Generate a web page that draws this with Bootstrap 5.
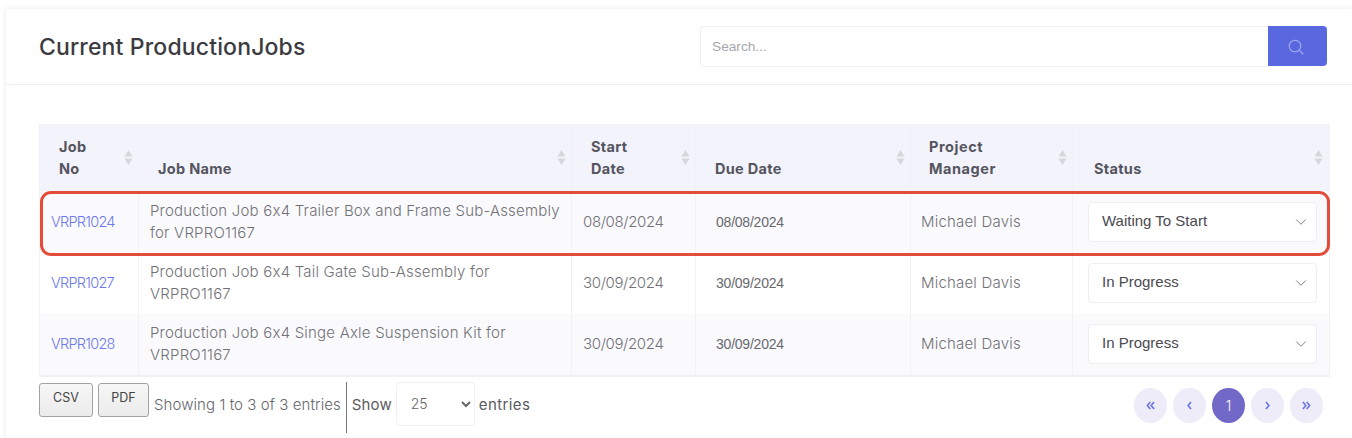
<!doctype html>
<html lang="en"><head><meta charset="utf-8"><title>Current Production Jobs</title>
<link href="https://cdn.jsdelivr.net/npm/bootstrap@5.3.0/dist/css/bootstrap.min.css" rel="stylesheet">
<style>
html,body{height:438px;overflow:hidden}
body{background:#fff;font-family:Inter,"Noto Sans",sans-serif;color:#6e6e73;font-feature-settings:"calt" 0,"liga" 0}
.job-panel{margin:9px 0 0 6px;height:440px;background:#fff;border:0;border-radius:0;box-shadow:0 0 5px rgba(80,80,200,.13)}
.job-head{height:76px;padding:0 25px 0 33px;border-bottom:1px solid #eeeef6;display:flex;align-items:center;justify-content:space-between}
.job-title{font-size:23px;font-weight:500;color:#3b3b3f;margin:2px 0 0;letter-spacing:.15px}
.job-search{width:627px;height:41px}
.job-search input{border:1px solid #eeeef4;border-right:0;border-radius:4px 0 0 4px;font-size:13.7px;padding:0 11px;font-family:"Liberation Sans",sans-serif;height:41px}
.job-search input::placeholder{color:#a7a7af}
.job-search button{width:59px;height:40px;background:#5a68e0;border:0;border-radius:0 4px 4px 0;padding:0 4px 2px 0}
.job-body{padding:39px 16px 0 33px;position:relative}
.job-table{table-layout:fixed;width:1290px;margin:0;border-collapse:collapse;font-size:15px;line-height:22px}
.job-table th{background:#f3f3fb;color:#55555f;font-weight:700;font-size:14.5px;letter-spacing:.3px;vertical-align:bottom;padding:12px 19px 11px;height:67px;border:1px solid #f0f0f6;border-width:0 1px;position:relative}
.job-table th:nth-child(5){padding-left:18px;letter-spacing:.55px}
.job-table th:last-child{padding-left:21px}
.job-table td{color:#717177;font-weight:300;letter-spacing:.2px;padding:0 11px;height:61.6px;vertical-align:middle;border:1px solid #f1f1f6;border-width:0 1px;background:#fff}
.job-table td.cell-who{padding-left:10px}
.job-table tr.zebra td{background:#fafafd}
.job-table tbody{border-bottom:2px solid #f0f0f6}
.job-table a{color:#6c78ec;text-decoration:none;font-size:14.5px;letter-spacing:-.75px;font-weight:300}
.job-table td.cell-date{letter-spacing:-.35px}
.job-table td.cell-sm{font-family:"Liberation Sans",sans-serif;font-size:14px;font-weight:400;color:#68686e;letter-spacing:-.22px;padding-left:20px}
.job-table td.cell-st{padding:0 12px 0 15px}
.sort-ic{position:absolute;right:5px;top:26px;width:9px;height:15px}
.job-table th:last-child .sort-ic{right:6px}
.status-sel{height:40px;font-family:"Liberation Sans",sans-serif;font-size:15px;color:#4a4a50;border:1px solid #eeeef4;border-radius:4px;padding:0 30px 2px 13px;background-position:right 7px center;background-size:16px 12px;background-image:url("data:image/svg+xml,%3csvg xmlns='http://www.w3.org/2000/svg' viewBox='0 0 16 16'%3e%3cpath fill='none' stroke='%23666' stroke-linecap='round' stroke-width='1.1' d='M2 5l6 6 6-6'/%3e%3c/svg%3e")}
.job-mark{position:absolute;left:34px;top:105.5px;width:1290px;height:65px;border:3.5px solid #e34c39;border-radius:11px;pointer-events:none}
.job-foot{display:flex;justify-content:space-between;align-items:flex-start;height:60px;width:1291px;font-size:15px;font-weight:300;color:#66666b;padding-top:5px}
.job-foot .tool{height:34px;margin-top:1px;border:1px solid #a3a3a3;border-radius:3px;background:linear-gradient(#f6f6f6,#ececec);font-size:12.5px;color:#444;font-family:Inter,sans-serif;padding:0 0 3px;box-shadow:none}
.foot-txt{margin:12px 0 0 5px;font-weight:300;letter-spacing:.08px;white-space:nowrap}
.foot-dark{margin-top:12px;font-weight:400;color:#5b5b60;letter-spacing:.1px}
.foot-end{margin-left:4px;letter-spacing:.4px}
.rule-v{border-left:1px solid #777;height:51px;margin:0 5px}
.size-sel{width:79px;height:44px;margin:0 0 0 4px;font-size:14px;border:1px solid #f0f0f6;border-radius:4px;background:#fff;color:#666;padding-left:10px;font-family:Inter,sans-serif;font-weight:300}
.pg-wrap{display:flex;gap:6px;padding:6px 7px 0 0}
.pg-dot{width:33px;height:35px;padding:0;border:0;border-radius:50%;background:#edecf8;color:#6672e6;display:flex;align-items:center;justify-content:center}
.pg-dot.current{background:#7168c8;color:#fff;font-size:14px;font-weight:300}
</style></head><body>
<div class="card job-panel">
 <div class="job-head">
  <h1 class="job-title">Current ProductionJobs</h1>
  <div class="input-group job-search flex-nowrap">
   <input class="form-control" placeholder="Search..." aria-label="Search">
   <button class="btn" type="button" aria-label="Search"><svg width="16" height="16" viewBox="0 0 16 16" fill="none" stroke="#a5adf1" stroke-width="1.1" stroke-linecap="round"><circle cx="7" cy="7" r="5.8"/><path d="M11.2 11.2L15 15"/></svg></button>
  </div>
 </div>
 <div class="job-body">
  <table class="job-table table mb-0">
   <colgroup><col style="width:99px"><col style="width:433px"><col style="width:124px"><col style="width:215px"><col style="width:162px"><col style="width:257px"></colgroup>
   <thead><tr>
    <th>Job<br>No<svg class="sort-ic" viewBox="0 0 9 15" fill="#d6d6dc"><path d="M4.500 0l4 6.500H.5zM4.500 15l4-6.500H.5z"/></svg></th>
    <th>Job Name<svg class="sort-ic" viewBox="0 0 9 15" fill="#d6d6dc"><path d="M4.500 0l4 6.500H.5zM4.500 15l4-6.500H.5z"/></svg></th>
    <th>Start<br>Date<svg class="sort-ic" viewBox="0 0 9 15" fill="#d6d6dc"><path d="M4.500 0l4 6.500H.5zM4.500 15l4-6.500H.5z"/></svg></th>
    <th>Due Date<svg class="sort-ic" viewBox="0 0 9 15" fill="#d6d6dc"><path d="M4.500 0l4 6.500H.5zM4.500 15l4-6.500H.5z"/></svg></th>
    <th>Project<br>Manager<svg class="sort-ic" viewBox="0 0 9 15" fill="#d6d6dc"><path d="M4.500 0l4 6.500H.5zM4.500 15l4-6.500H.5z"/></svg></th>
    <th>Status<svg class="sort-ic" viewBox="0 0 9 15" fill="#d6d6dc"><path d="M4.500 0l4 6.500H.5zM4.500 15l4-6.500H.5z"/></svg></th>
   </tr></thead>
   <tbody>
    <tr class="zebra"><td><a href="#">VRPR1024</a></td><td>Production Job 6x4 Trailer Box and Frame Sub-Assembly for VRPRO1167</td><td class="cell-date">08/08/2024</td><td class="cell-sm">08/08/2024</td><td class="cell-who">Michael Davis</td><td class="cell-st"><select class="form-select status-sel" aria-label="Status"><option>Waiting To Start</option></select></td></tr>
    <tr><td><a href="#">VRPR1027</a></td><td>Production Job 6x4 Tail Gate Sub-Assembly for VRPRO1167</td><td class="cell-date">30/09/2024</td><td class="cell-sm">30/09/2024</td><td class="cell-who">Michael Davis</td><td class="cell-st"><select class="form-select status-sel" aria-label="Status"><option>In Progress</option></select></td></tr>
    <tr class="zebra"><td><a href="#">VRPR1028</a></td><td>Production Job 6x4 Singe Axle Suspension Kit for VRPRO1167</td><td class="cell-date">30/09/2024</td><td class="cell-sm">30/09/2024</td><td class="cell-who">Michael Davis</td><td class="cell-st"><select class="form-select status-sel" aria-label="Status"><option>In Progress</option></select></td></tr>
   </tbody>
  </table>
  <div class="job-mark"></div>
  <div class="job-foot">
   <div class="d-flex align-items-start">
    <button class="btn tool" style="width:54px;margin-right:5px">CSV</button><button class="btn tool" style="width:51px">PDF</button>
    <span class="foot-txt">Showing 1 to 3 of 3 entries</span>
    <span class="rule-v"></span>
    <span class="foot-dark">Show</span>
    <select class="size-sel" aria-label="Entries"><option>25</option></select>
    <span class="foot-dark foot-end">entries</span>
   </div>
   <div class="pg-wrap">
    <button class="pg-dot" aria-label="First"><svg width="9" height="9" viewBox="0 0 10 10" fill="none" stroke="currentColor" stroke-width="1.7"><path d="M4.800 1L1.500 5l3.300 4M9 1L5.700 5 9 9"/></svg></button>
    <button class="pg-dot" aria-label="Previous"><svg width="9" height="9" viewBox="0 0 10 10" fill="none" stroke="currentColor" stroke-width="1.7"><path d="M6.700 1L3.400 5l3.300 4"/></svg></button>
    <button class="pg-dot current">1</button>
    <button class="pg-dot" aria-label="Next"><svg width="9" height="9" viewBox="0 0 10 10" fill="none" stroke="currentColor" stroke-width="1.7"><path d="M3.300 1l3.300 4-3.300 4"/></svg></button>
    <button class="pg-dot" aria-label="Last"><svg width="9" height="9" viewBox="0 0 10 10" fill="none" stroke="currentColor" stroke-width="1.7"><path d="M1 1l3.300 4L1 9M5.200 1l3.300 4-3.300 4"/></svg></button>
   </div>
  </div>
 </div>
</div>
<script src="https://cdn.jsdelivr.net/npm/bootstrap@5.3.0/dist/js/bootstrap.bundle.min.js"></script>
</body></html>
